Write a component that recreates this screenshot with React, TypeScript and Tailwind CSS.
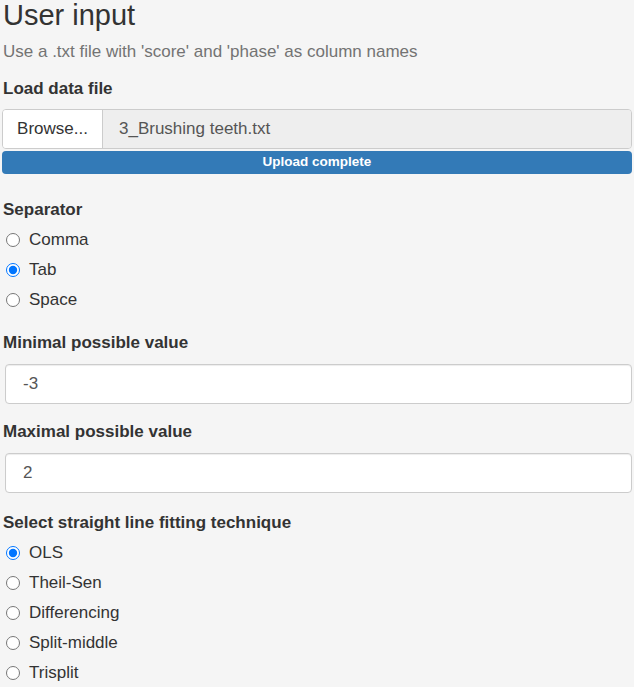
import React from "react"

type Choice = { label: string; checked?: boolean }

function RadioGroup({ name, label, options, gapTop }: { name: string; label: string; options: Choice[]; gapTop: string }) {
  return (
    <div className={gapTop}>
      <div className="h-5 leading-5 font-bold text-[17px] text-[#333]">{label}</div>
      <div className="mt-[5px] flex flex-col">
        {options.map((opt) => (
          <label key={opt.label} className="h-[30px] flex items-center">
            <input
              type="radio"
              name={name}
              defaultChecked={opt.checked}
              className="ml-[3px] w-[14px] h-[14px] m-0 accent-[#0075ff]"
            />
            <span className="ml-[9px] text-[17px] text-[#333]">{opt.label}</span>
          </label>
        ))}
      </div>
    </div>
  )
}

function NumberField({ label, value }: { label: string; value: string }) {
  return (
    <div className="mt-[18px]">
      <div className="h-5 leading-5 font-bold text-[17px] text-[#333]">{label}</div>
      <div className="mt-[11px] mx-[2px] h-10 rounded-[4px] border border-[#ccc] bg-white shadow-[inset_0_1px_1px_rgba(0,0,0,0.075)] flex items-center px-[17px] text-[17px] text-[#555]">
        {value}
      </div>
    </div>
  )
}

export default function App() {
  return (
    <div className="min-h-screen bg-[#f5f5f5] font-['Liberation_Sans',Arial,sans-serif] pl-[3px] pb-2">
      <h3 className="h-[30px] leading-[31px] text-[29px] font-normal text-[#333]">User input</h3>
      <p className="mt-3 h-5 leading-5 text-[17px] text-[#737373]">
        Use a .txt file with 'score' and 'phase' as column names
      </p>

      <div className="mt-[17px] h-5 leading-5 font-bold text-[17px] text-[#333]">Load data file</div>
      <div className="mt-[10px] mr-[2px] -ml-[1px] h-10 flex rounded-[4px] border border-[#ccc] overflow-hidden">
        <div className="w-[100px] bg-white border-r border-[#ccc] flex items-center justify-center text-[17px] text-[#333]">
          Browse...
        </div>
        <div className="flex-1 bg-[#eeeeee] flex items-center pl-[16px] text-[17px] text-[#555]">
          3_Brushing teeth.txt
        </div>
      </div>
      <div className="mt-[2px] mr-[2px] -ml-[1px] h-[23px] rounded-[4px] bg-[#337ab7] flex items-center justify-center text-white font-bold text-[13.5px]">
        Upload complete
      </div>

      <RadioGroup
        name="sep"
        label="Separator"
        gapTop="mt-[26px]"
        options={[{ label: "Comma" }, { label: "Tab", checked: true }, { label: "Space" }]}
      />

      <NumberField label="Minimal possible value" value="-3" />
      <NumberField label="Maximal possible value" value="2" />

      <RadioGroup
        name="fit"
        label="Select straight line fitting technique"
        gapTop="mt-5"
        options={[
          { label: "OLS", checked: true },
          { label: "Theil-Sen" },
          { label: "Differencing" },
          { label: "Split-middle" },
          { label: "Trisplit" },
        ]}
      />
    </div>
  )
}
